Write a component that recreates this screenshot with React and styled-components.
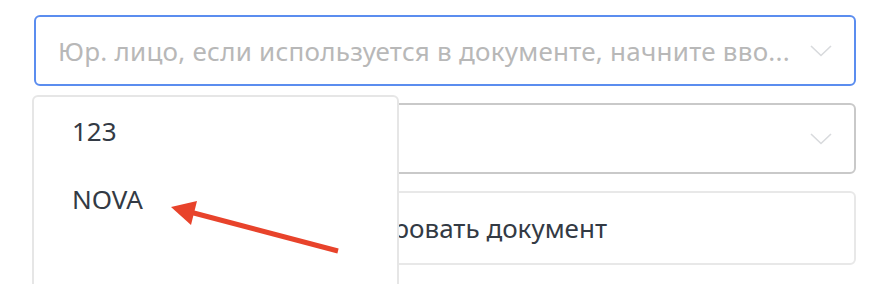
import React from "react";
import styled, { createGlobalStyle } from "styled-components";

const GlobalStyle = createGlobalStyle`
  html, body {
    margin: 0;
    padding: 0;
    background: #ffffff;
  }
  body {
    font-family: "Noto Sans", "Open Sans", Arial, sans-serif;
  }
`;

const Page = styled.div`
  position: relative;
  width: 890px;
  height: 284px;
  overflow: hidden;
  padding: 15px 34px 0 34px;
  box-sizing: border-box;
  display: flex;
  flex-direction: column;
  gap: 17px;
`;

const Field = styled.div`
  height: ${(p) => p.$height || 71}px;
  box-sizing: border-box;
  border: 2px solid ${(p) => p.$border};
  border-radius: 6px;
  display: flex;
  align-items: center;
  justify-content: space-between;
  padding: 0 22px 0 22px;
  font-size: 26px;
  color: #333a44;
  white-space: nowrap;
`;

const Button = styled(Field)`
  justify-content: flex-end;
  padding-right: 247px;
`;

const Placeholder = styled.span`
  color: #b8b8b8;
  letter-spacing: 0.25px;
`;

const Chevron = () => (
  <svg width="22" height="12" viewBox="0 0 22 12" fill="none">
    <path d="M1 1 L11 10.5 L21 1" stroke="#d8dadd" strokeWidth="1.6" />
  </svg>
);

const Menu = styled.ul`
  position: absolute;
  left: 32px;
  top: 95px;
  width: 367px;
  height: 220px;
  box-sizing: border-box;
  margin: 0;
  padding: 0;
  list-style: none;
  background: #ffffff;
  border: 2px solid #e6e6e6;
  border-radius: 6px;
`;

const Option = styled.li`
  height: 68px;
  display: flex;
  align-items: center;
  padding-left: 38px;
  font-size: 26px;
  color: #333a44;
`;

const Arrow = styled.svg`
  position: absolute;
  left: 0;
  top: 0;
  pointer-events: none;
`;

export default function App() {
  return (
    <>
      <GlobalStyle />
      <Page>
        <Field $border="#5b8def">
          <Placeholder>Юр. лицо, если используется в документе, начните вво...</Placeholder>
          <Chevron />
        </Field>
        <Field $border="#c9c9c9">
          <span />
          <Chevron />
        </Field>
        <Button $border="#e8e8e8" $height={74}>
          Сформировать документ
        </Button>
        <Menu>
          <Option>123</Option>
          <Option>NOVA</Option>
        </Menu>
        <Arrow width="890" height="284" viewBox="0 0 890 284">
          <line x1="338" y1="251" x2="190" y2="212" stroke="#e8432b" strokeWidth="5" />
          <polygon points="171,207 197,201 191,225" fill="#e8432b" />
        </Arrow>
      </Page>
    </>
  );
}
